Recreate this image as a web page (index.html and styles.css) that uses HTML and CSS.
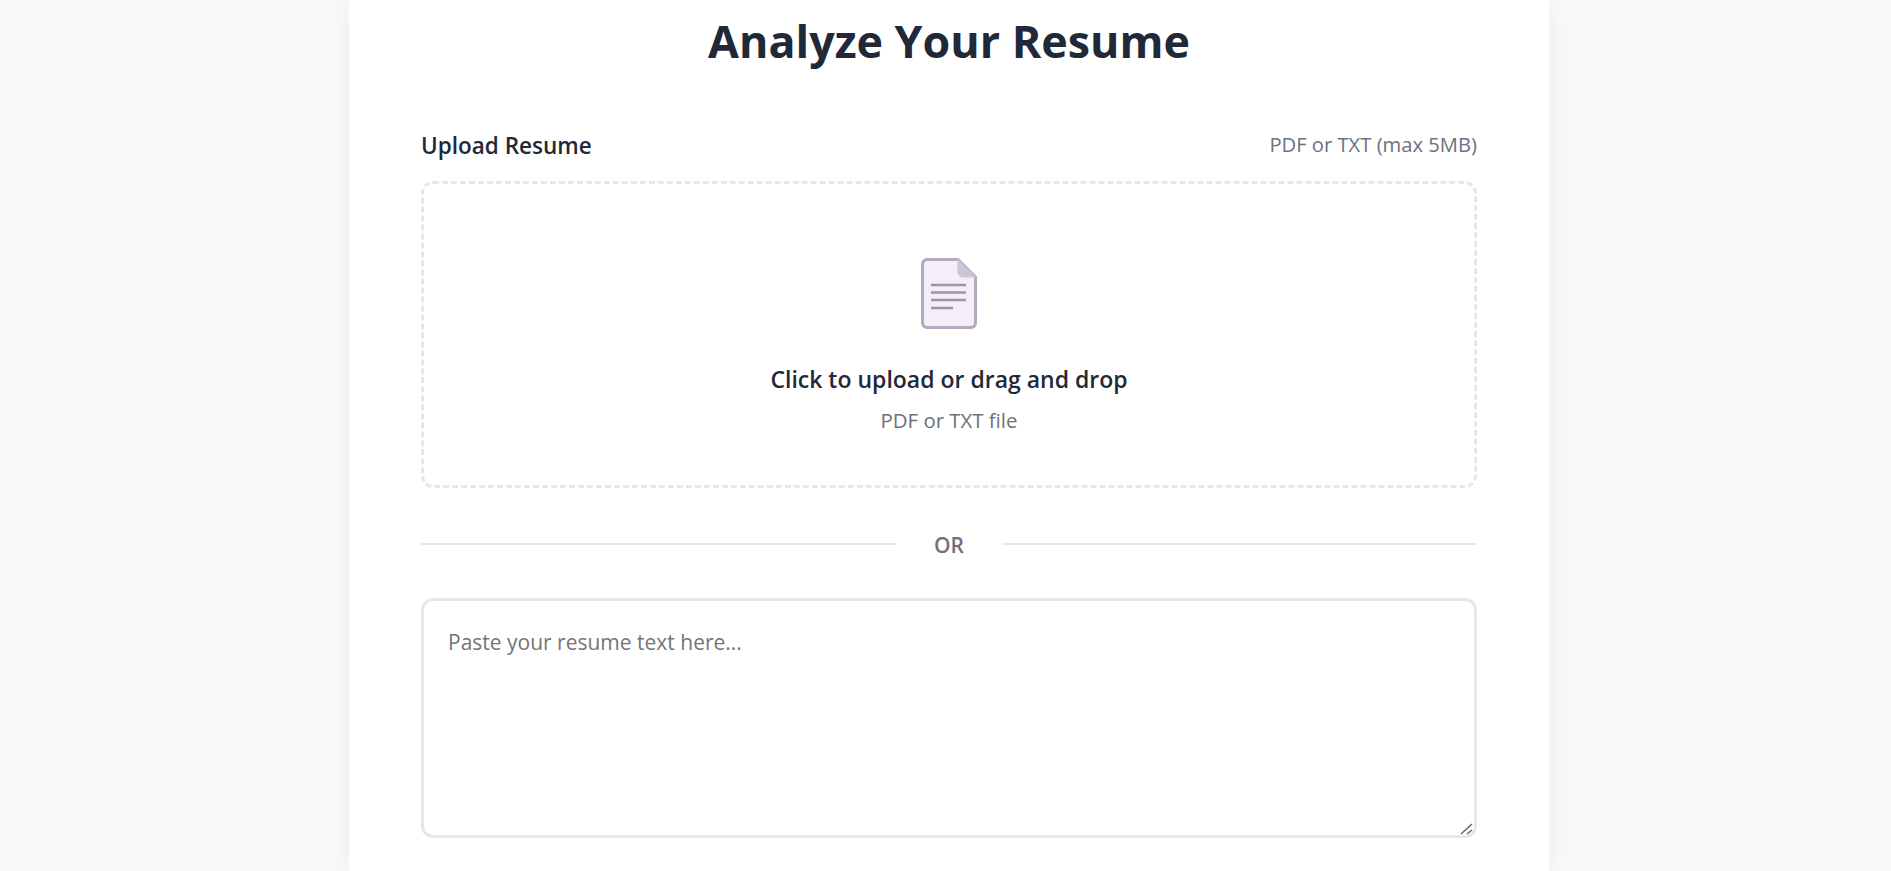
FILE: index.html
```html
<!DOCTYPE html>
<html lang="en">
<head>
  <meta charset="UTF-8">
  <meta name="viewport" content="width=device-width, initial-scale=1.0">
  <title>Analyze Your Resume</title>
  <link rel="stylesheet" href="styles.css">
</head>
<body>
  <main class="card">
    <h1>Analyze Your Resume</h1>

    <div class="field-head">
      <label for="resume-file">Upload Resume</label>
      <span class="hint">PDF or TXT (max 5MB)</span>
    </div>

    <div class="dropzone" id="resume-file">
      <svg class="file-icon" width="56" height="72" viewBox="0 0 56 72" aria-hidden="true">
        <path d="M6 1.500H37L54.500 19V65a4.500 4.500 0 0 1-4.500 4.500H6A4.500 4.500 0 0 1 1.500 65V6A4.500 4.500 0 0 1 6 1.500Z" fill="#f3eef8" stroke="#b4aabe" stroke-width="3" stroke-linejoin="round"/>
        <path d="M37 1.500V14a5 5 0 0 0 5 5H54.500Z" fill="#cdc4d6" stroke="#cdc4d6" stroke-width="1" stroke-linejoin="round"/>
        <path d="M10 27H45M10 34.500H45M10 42H45M10 50H32" fill="none" stroke="#a093ab" stroke-width="2.600"/>
      </svg>
      <p class="drop-title">Click to upload or drag and drop</p>
      <p class="drop-sub">PDF or TXT file</p>
    </div>

    <div class="divider"><span>OR</span></div>

    <textarea class="resume-text" placeholder="Paste your resume text here..."></textarea>
  </main>
</body>
</html>
```

FILE: styles.css
```css
html, body {
  height: 100%;
  overflow: hidden;
}
body {
  box-sizing: border-box;
  margin: 0;
  padding-left: 7px;
  background-color: #f8f9fb;
  font-family: 'Open Sans', 'Noto Sans', sans-serif;
  color: #1f2937;
}
.card {
  box-sizing: border-box;
  width: 1200px;
  height: 871px;
  margin: 0 auto;
  padding: 12px 72px 0;
  background: white;
  box-shadow: 0 4px 24px rgba(0, 0, 0, 0.06);
}
h1 {
  margin: 0 0 60px;
  font-size: 44.800px;
  font-weight: 700;
  line-height: 58px;
  text-align: center;
}
.field-head {
  display: flex;
  justify-content: space-between;
  align-items: flex-start;
  margin-bottom: 20px;
}
label {
  padding-top: 1px;
  font-size: 22.500px;
  font-weight: 600;
  line-height: 30px;
}
.hint {
  margin-top: -1px;
  font-size: 20.200px;
  line-height: 30px;
  color: #6b7280;
}
.dropzone {
  box-sizing: border-box;
  height: 307px;
  padding-top: 74px;
  border: 3px dashed #e5e7eb;
  border-radius: 12px;
  text-align: center;
}
.file-icon {
  display: block;
  margin: 0 auto 34px;
}
.drop-title {
  margin: 0 0 12px;
  font-size: 23px;
  font-weight: 600;
  line-height: 30px;
}
.drop-sub {
  margin: 0;
  font-size: 20.400px;
  line-height: 28px;
  color: #6b7280;
}
.divider {
  display: flex;
  align-items: center;
  gap: 38px;
  margin: 40px 0 38px;
  font-size: 21px;
  font-weight: 600;
  color: #6b7280;
}
.divider span {
  padding-top: 2px;
  line-height: 30px;
}
.divider::before, .divider::after {
  content: "";
  flex: 1;
  height: 2px;
  background-color: #e5e7eb;
}
.resume-text {
  display: block;
  box-sizing: border-box;
  width: 100%;
  height: 240px;
  padding: 28px 24px 24px;
  border: 3px solid #e5e7eb;
  border-radius: 12px;
  font-family: inherit;
  font-size: 21px;
  line-height: 1.3;
  color: #1f2937;
  resize: vertical;
  outline: none;
}
.resume-text::-webkit-resizer {
  background: url("data:image/svg+xml,%3Csvg xmlns='http://www.w3.org/2000/svg' width='15' height='15'%3E%3Cpath d='M2 14L13 4M8 14L13 10' stroke='%23666' stroke-width='1.500' fill='none'/%3E%3C/svg%3E") no-repeat;
}
```
